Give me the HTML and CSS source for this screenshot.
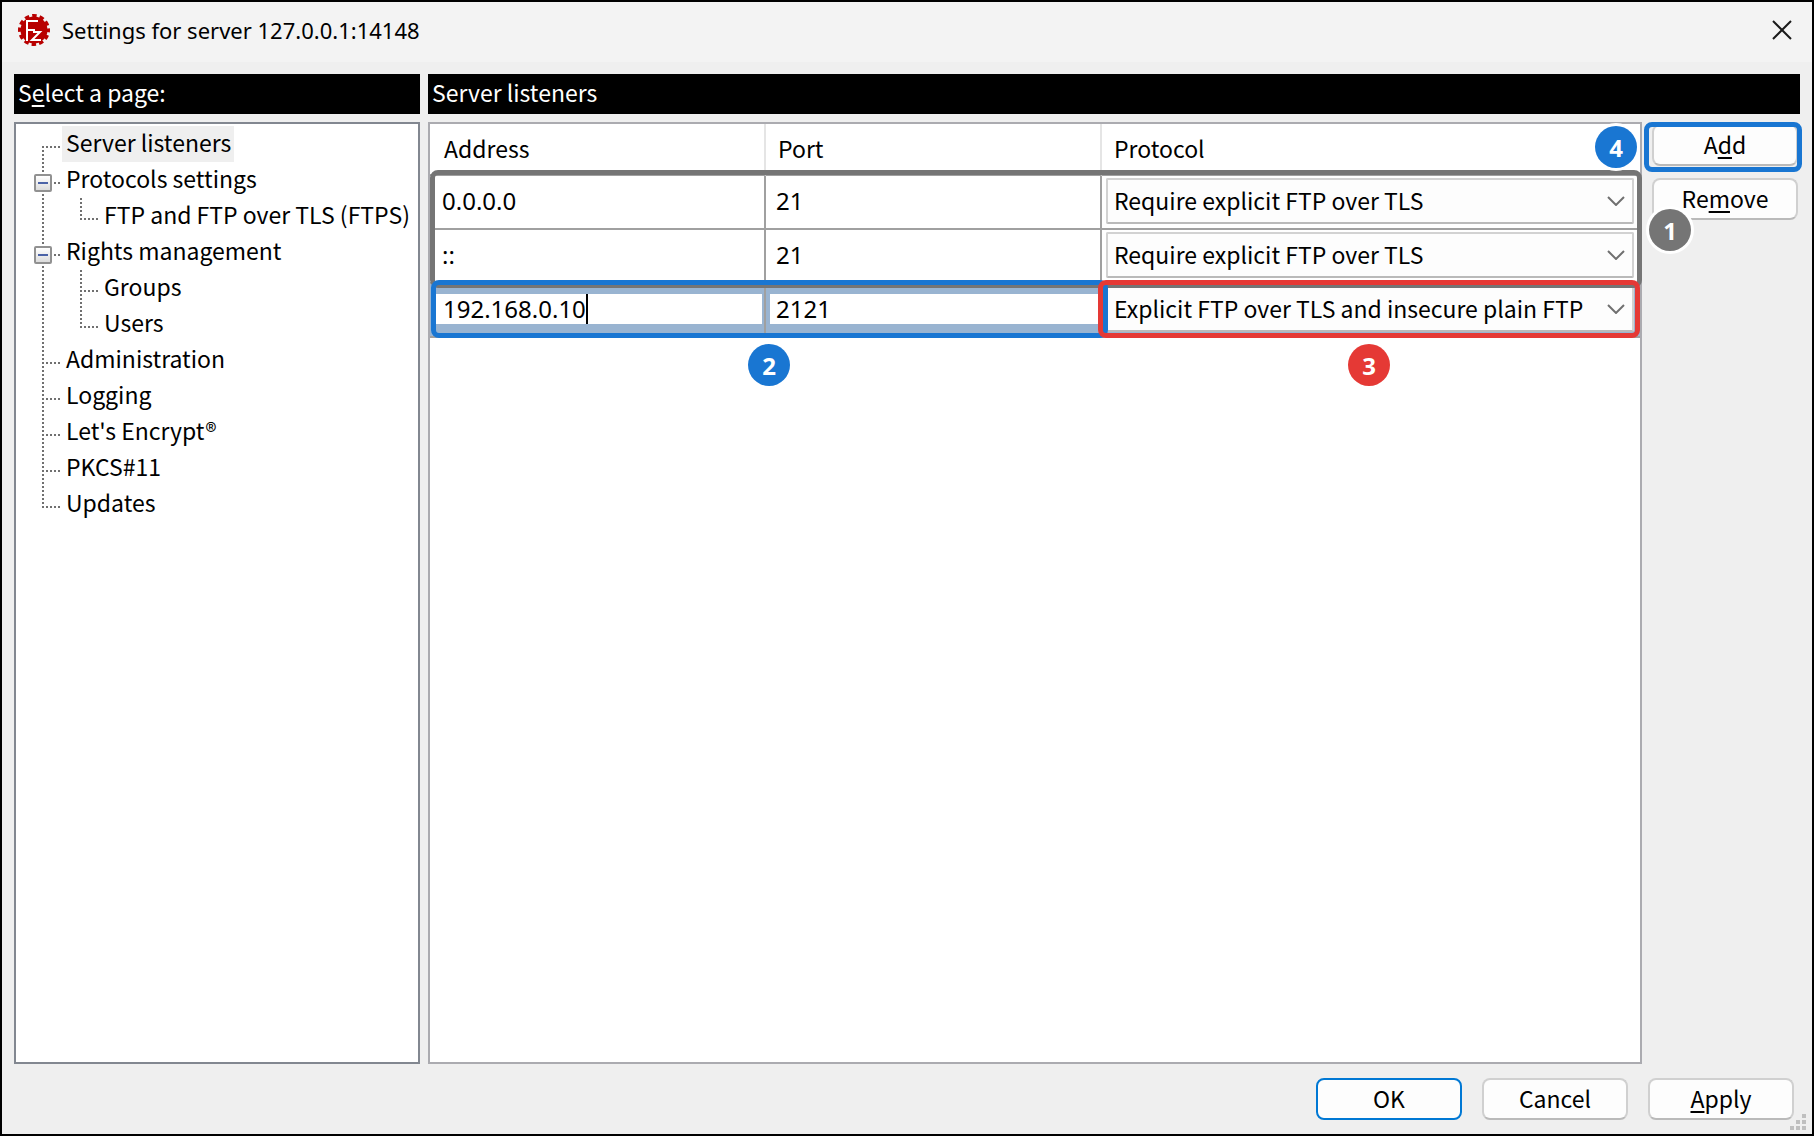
FILE: index.html
```html
<!DOCTYPE html>
<html lang="en">
<head>
<meta charset="utf-8">
<title>Settings for server 127.0.0.1:14148</title>
<link rel="stylesheet" href="styles.css">
</head>
<body>
<div class="window">
  <header class="titlebar">
    <svg class="app-icon" viewBox="0 0 32 32" aria-hidden="true">
      <circle cx="16" cy="16" r="13.5" fill="#b80000"/>
      <circle cx="16" cy="16" r="14" fill="none" stroke="#b80000" stroke-width="4" stroke-dasharray="4.4 2.93" stroke-dashoffset="2.2"/>
      <path d="M9 27V7H20M9 16H17" fill="none" stroke="#fff" stroke-width="2"/>
      <path d="M15 18H22L14 26H23" fill="none" stroke="#fff" stroke-width="2"/>
    </svg>
    <h1 class="title">Settings for server 127.0.0.1:14148</h1>
    <button class="close" type="button" aria-label="Close">
      <svg width="20" height="20" viewBox="0 0 20 20"><path d="M1 1L19 19M19 1L1 19" stroke="#1a1a1a" stroke-width="2"/></svg>
    </button>
  </header>

  <main class="content">
    <section class="pages">
      <h2 class="caption">S<u>e</u>lect a page:</h2>
      <ul class="tree">
        <li class="row"><span class="guide first"></span><a class="label selected" href="#listeners">Server listeners</a></li>
        <li class="row"><span class="guide"><button class="expander" type="button" aria-label="Collapse Protocols settings"></button></span><a class="label" href="#protocols">Protocols settings</a></li>
        <li class="row"><span class="guide pass"></span><span class="guide child last"></span><a class="label" href="#ftp">FTP and FTP over TLS (FTPS)</a></li>
        <li class="row"><span class="guide"><button class="expander" type="button" aria-label="Collapse Rights management"></button></span><a class="label" href="#rights">Rights management</a></li>
        <li class="row"><span class="guide pass"></span><span class="guide child"></span><a class="label" href="#groups">Groups</a></li>
        <li class="row"><span class="guide pass"></span><span class="guide child last"></span><a class="label" href="#users">Users</a></li>
        <li class="row"><span class="guide"></span><a class="label" href="#admin">Administration</a></li>
        <li class="row"><span class="guide"></span><a class="label" href="#logging">Logging</a></li>
        <li class="row"><span class="guide"></span><a class="label" href="#encrypt">Let's Encrypt®</a></li>
        <li class="row"><span class="guide"></span><a class="label" href="#pkcs">PKCS#11</a></li>
        <li class="row"><span class="guide last"></span><a class="label" href="#updates">Updates</a></li>
      </ul>
    </section>

    <section class="panel">
      <h2 class="caption">Server listeners</h2>
      <div class="panel-body">
        <div class="list">
          <table class="grid">
            <colgroup><col class="narrow"><col class="narrow"><col></colgroup>
            <thead>
              <tr><th>Address</th><th>Port</th><th>Protocol</th></tr>
            </thead>
            <tbody>
              <tr>
                <td class="num">0.0.0.0</td><td class="num">21</td>
                <td class="choice"><div class="combo"><select aria-label="Protocol for 0.0.0.0"><option>Require explicit FTP over TLS</option></select><svg class="chevron" viewBox="0 0 18 10"><path d="M1 1L9 9L17 1"/></svg></div></td>
              </tr>
              <tr>
                <td class="num">::</td><td class="num">21</td>
                <td class="choice"><div class="combo"><select aria-label="Protocol for ::"><option>Require explicit FTP over TLS</option></select><svg class="chevron" viewBox="0 0 18 10"><path d="M1 1L9 9L17 1"/></svg></div></td>
              </tr>
              <tr class="editing">
                <td class="edit"><input class="address" type="text" value="192.168.0.10" aria-label="Address"><span class="caret"></span></td>
                <td class="edit"><input type="text" value="2121" aria-label="Port"></td>
                <td class="choice"><div class="combo"><select aria-label="Protocol for 192.168.0.10"><option>Explicit FTP over TLS and insecure plain FTP</option></select><svg class="chevron" viewBox="0 0 18 10"><path d="M1 1L9 9L17 1"/></svg></div></td>
              </tr>
            </tbody>
          </table>
          <div class="mark mark-existing"></div>
          <div class="mark mark-address"></div>
          <div class="mark mark-protocol"></div>
          <span class="badge badge-existing">1</span>
          <span class="badge badge-address">2</span>
          <span class="badge badge-protocol">3</span>
          <span class="badge badge-add">4</span>
        </div>
        <div class="actions">
          <div class="add"><button class="button" type="button"><span>A<u>d</u>d</span></button><div class="mark mark-add"></div></div>
          <button class="button" type="button"><span>Re<u>m</u>ove</span></button>
        </div>
      </div>
    </section>
  </main>

  <footer class="footer">
    <button class="button default" type="button"><span>OK</span></button>
    <button class="button" type="button"><span>Cancel</span></button>
    <button class="button" type="button"><span><u>A</u>pply</span></button>
    <svg class="grip" width="16" height="16" viewBox="0 0 16 16" fill="#bfbfbf"><path d="M12 0h4v4h-4zM6 6h4v4H6zM12 6h4v4h-4zM0 12h4v4H0zM6 12h4v4H6zM12 12h4v4h-4z"/></svg>
  </footer>
</div>
</body>
</html>
```
FILE: styles.css
```css
* {
  box-sizing: border-box;
}

body {
  margin: 0;
  font-family: "Noto Sans CJK KR", "Noto Sans", sans-serif;
  font-size: 23px;
  line-height: 32px;
  color: #000;
}

button,
input,
select {
  margin: 0;
  font: inherit;
  color: inherit;
}

u {
  text-decoration-thickness: 2px;
  text-underline-offset: 3px;
  text-decoration-skip-ink: none;
}

.window {
  position: relative;
  display: flex;
  flex-direction: column;
  min-height: 100vh;
  border: 2px solid #000;
  background: #efefef;
}

/* Title bar */

.titlebar {
  display: flex;
  align-items: center;
  height: 60px;
  padding: 0 20px 4px 16px;
  background: #f3f3f3;
}

.app-icon {
  width: 32px;
  height: 32px;
}

.title {
  flex: 1;
  margin: 0 0 0 12px;
  font-family: "Noto Sans", sans-serif;
  font-size: 22px;
  font-weight: 400;
}

.close {
  display: flex;
  padding: 0;
  border: 0;
  background: none;
}

/* Page tree */

.content {
  flex: 1;
  display: grid;
  grid-template-columns: 406px 1fr;
  gap: 8px;
  padding: 12px 12px 0;
}

.pages,
.panel {
  display: flex;
  flex-direction: column;
  gap: 8px;
}

.caption {
  height: 40px;
  margin: 0;
  padding: 2px 4px;
  background: #000;
  color: #fff;
  font-size: 23px;
  font-weight: 400;
}

.tree {
  flex: 1;
  margin: 0;
  padding: 2px 0;
  border: 2px solid #828790;
  background: #fff;
  list-style: none;
}

.row {
  display: flex;
  height: 36px;
}

.guide {
  width: 46px;
  padding: 12px 0 0 18px;
  background-image:
    repeating-linear-gradient(#707070 0 2px, #fff 2px 4px),
    repeating-linear-gradient(90deg, #707070 0 2px, #fff 2px 4px);
  background-repeat: no-repeat;
  background-position: 26px 0, 26px 20px;
  background-size: 2px 36px, 18px 2px;
}

.guide.first {
  background-position: 26px 20px, 26px 20px;
}

.guide.last {
  background-size: 2px 20px, 18px 2px;
}

.guide.pass {
  background-size: 2px 36px, 0 0;
}

.guide.child {
  width: 38px;
  background-position: 18px 0, 18px 20px;
}

.expander {
  display: flex;
  align-items: center;
  justify-content: center;
  width: 18px;
  height: 18px;
  padding: 0;
  border: 2px solid #919191;
  border-radius: 2px;
  background: linear-gradient(#fff, #dcdcdc);
}

.expander::before {
  content: "";
  width: 10px;
  height: 2px;
  background: #4b63a7;
}

.label {
  padding: 0 3px 4px 4px;
  color: inherit;
  text-decoration: none;
  white-space: nowrap;
}

.label.selected {
  background: #efefef;
}

/* Listener table */

.panel-body {
  flex: 1;
  display: flex;
  gap: 10px;
}

.list {
  position: relative;
  flex: 1;
  border: 2px solid #ababb0;
  background: #fff;
}

.grid {
  width: 100%;
  border-spacing: 0;
  table-layout: fixed;
}

.narrow {
  width: 336px;
}

.grid th,
.grid td {
  height: 54px;
  padding: 0 10px 2px;
  border-right: 2px solid #a0a0a0;
  border-bottom: 2px solid #a0a0a0;
  text-align: left;
  vertical-align: middle;
  font-weight: 400;
}

.grid th {
  height: 52px;
  padding: 0 12px 2px 14px;
  border-right-color: #e5e5e5;
}

.grid td.num {
  padding-left: 12px;
}

.grid td:nth-child(2) {
  padding-left: 10px;
}

.grid th:nth-child(n + 2) {
  padding-left: 12px;
}

.grid td:last-child,
.grid th:last-child {
  border-right: 0;
}

.num,
.edit {
  font-family: "Noto Sans", sans-serif;
  font-size: 24px;
}

.editing {
  background: #99b4d1;
}

.grid td.edit {
  position: relative;
  padding: 10px 2px 12px 4px;
}

.grid td.edit:first-child {
  padding-left: 6px;
}

.edit input {
  display: block;
  width: 100%;
  height: 30px;
  padding: 0 6px;
  border: 0;
  background: #fff;
}

.edit .address {
  padding: 0 7px;
}

.caret {
  position: absolute;
  top: 10px;
  left: 156px;
  width: 2px;
  height: 30px;
  background: #000;
}

.grid td.choice {
  padding: 0 6px 2px 4px;
}

.combo {
  display: grid;
  align-items: center;
}

.combo > * {
  grid-area: 1 / 1;
}

.combo select {
  appearance: none;
  width: 100%;
  height: 46px;
  padding: 0 32px 2px 6px;
  border: 2px solid #d2d2d2;
  border-bottom-color: #bababa;
  border-radius: 2px;
  background: #fdfdfd;
}

.chevron {
  justify-self: end;
  width: 18px;
  height: 10px;
  margin-right: 9px;
  fill: none;
  stroke: #707070;
  stroke-width: 2;
  pointer-events: none;
}

/* Numbered callouts over the table */

.mark {
  position: absolute;
  border: 5px solid #1976d2;
  border-radius: 8px;
  pointer-events: none;
}

.mark-existing {
  top: 46px;
  left: 0;
  right: -2px;
  height: 118px;
  border-color: #757575;
}

.mark-address {
  top: 156px;
  left: 1px;
  width: 677px;
  height: 58px;
}

.mark-protocol {
  top: 156px;
  left: 668px;
  right: 0;
  height: 58px;
  border-color: #e53935;
}

.mark-add {
  inset: -2px -4px -6px -8px;
}

.badge {
  position: absolute;
  display: flex;
  align-items: center;
  justify-content: center;
  width: 42px;
  height: 42px;
  padding-top: 2px;
  border-radius: 50%;
  box-shadow: 0 0 0 3px #fff;
  background: #1976d2;
  color: #fff;
  font-family: "Noto Sans", sans-serif;
  font-size: 24px;
  font-weight: 700;
}

.badge-existing {
  top: 85px;
  right: -51px;
  background: #757575;
}

.badge-address {
  top: 220px;
  left: 318px;
}

.badge-protocol {
  top: 220px;
  right: 250px;
  background: #e53935;
}

.badge-add {
  top: 2px;
  right: 3px;
}

/* Buttons */

.actions {
  display: flex;
  flex-direction: column;
  gap: 12px;
  padding: 2px 2px 0 0;
}

.add {
  position: relative;
  display: flex;
}

.button {
  display: flex;
  justify-content: center;
  align-items: center;
  width: 146px;
  height: 42px;
  padding: 0 0 2px;
  border: 2px solid #d0d0d0;
  border-bottom-color: #bababa;
  border-radius: 8px;
  background: #fdfdfd;
}

.button.default {
  border-color: #0078d4;
}

.footer {
  display: flex;
  justify-content: flex-end;
  gap: 20px;
  padding: 14px 18px;
}

.grip {
  position: absolute;
  right: 6px;
  bottom: 4px;
}
```
